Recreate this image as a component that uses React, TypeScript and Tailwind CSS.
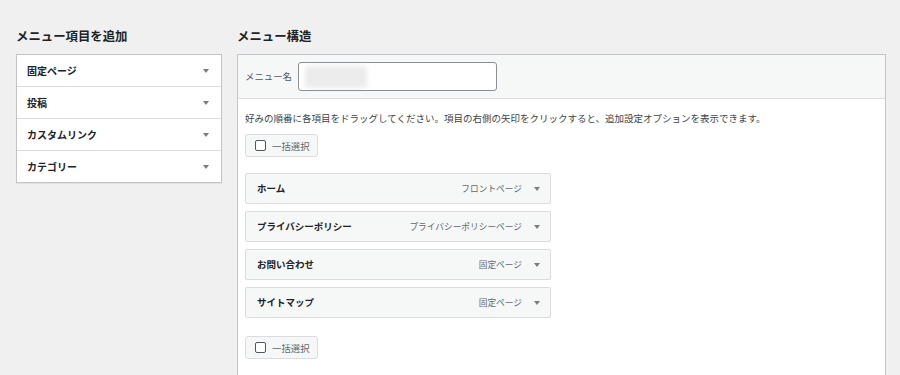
import React from "react";

const font = { fontFamily: '"Noto Sans CJK JP", "Noto Sans", sans-serif' };

function Arrow() {
  return (
    <svg width="6" height="4" viewBox="0 0 6 4" className="shrink-0">
      <path d="M0 0 L6 0 L3 4 Z" fill="#787c82" />
    </svg>
  );
}

function SelectAll() {
  return (
    <div className="flex h-[23px] w-[73px] items-center gap-[6px] rounded-[3px] border border-[#dcdcde] bg-[#f6f7f7] pl-[9px]">
      <div className="h-[11px] w-[11px] rounded-[2px] border border-[#50575e] bg-white" />
      <span className="text-[9.4px] leading-[12px] text-[#646970]">一括選択</span>
    </div>
  );
}

const leftItems = ["固定ページ", "投稿", "カスタムリンク", "カテゴリー"];
const menuItems = [
  { title: "ホーム", type: "フロントページ" },
  { title: "プライバシーポリシー", type: "プライバシーポリシーページ" },
  { title: "お問い合わせ", type: "固定ページ" },
  { title: "サイトマップ", type: "固定ページ" },
];

export default function App() {
  return (
    <div style={font} className="h-[375px] w-[900px] overflow-hidden bg-[#f0f0f1] pl-[16px]">
      <div className="flex gap-[15px]">
        <div className="w-[206px] shrink-0">
          <h2 className="mt-[29px] mb-[11px] text-[12.4px] font-bold leading-[14px] text-[#1d2327]">
            メニュー項目を追加
          </h2>
          <div className="border border-[#c3c4c7] bg-white shadow-[0_1px_1px_rgba(0,0,0,0.06)]">
            {leftItems.map((t, i) => (
              <div
                key={t}
                className={`flex items-center justify-between pl-[10px] pr-[12px] ${
                  i > 0 ? "h-[32px] border-t border-[#dcdcde]" : "h-[31px]"
                }`}
              >
                <span className="text-[10px] font-semibold text-[#1d2327]">{t}</span>
                <Arrow />
              </div>
            ))}
          </div>
        </div>
        <div className="w-[649px] shrink-0">
          <h2 className="mt-[29px] mb-[11px] text-[12.4px] font-bold leading-[14px] text-[#1d2327]">
            メニュー構造
          </h2>
          <div className="h-[400px] border border-[#c3c4c7] bg-white">
            <div className="flex h-[44px] items-center border-b border-[#dcdcde] bg-[#f6f7f7] pl-[7px]">
              <span className="w-[53px] text-[9.4px] text-[#50575e]">メニュー名</span>
              <div className="relative h-[29px] w-[199px] overflow-hidden rounded-[3px] border border-[#8c8f94] bg-white">
                <div className="absolute left-[6px] top-[3px] h-[22px] w-[62px] rounded-[2px] bg-[#ececec] blur-[2px]" />
              </div>
            </div>
            <div className="pl-[7px]">
              <p className="mt-[13px] text-[9.5px] leading-[12px] text-[#3c434a]">
                好みの順番に各項目をドラッグしてください。項目の右側の矢印をクリックすると、追加設定オプションを表示できます。
              </p>
              <div className="mt-[10px]">
                <SelectAll />
              </div>
              <div className="mt-[16px] flex w-[306px] flex-col gap-[7px]">
                {menuItems.map((m) => (
                  <div
                    key={m.title}
                    className="flex h-[31px] items-center rounded-[2px] border border-[#dcdcde] bg-[#f6f7f7] pl-[11px] pr-[10px]"
                  >
                    <span className="text-[9.5px] font-bold text-[#1d2327]">{m.title}</span>
                    <span className="ml-auto mr-[12px] text-[8.7px] text-[#646970]">{m.type}</span>
                    <Arrow />
                  </div>
                ))}
              </div>
              <div className="mt-[18px]">
                <SelectAll />
              </div>
            </div>
          </div>
        </div>
      </div>
    </div>
  );
}
